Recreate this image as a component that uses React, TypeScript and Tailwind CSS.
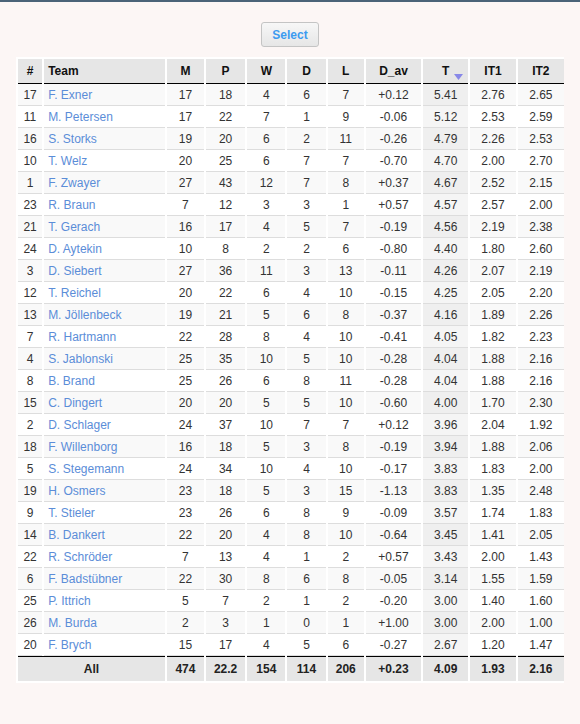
import React from "react";

type Row = [number, string, number, number, number, number, number, string, string, string, string];

const rows: Row[] = [
  [17, "F. Exner", 17, 18, 4, 6, 7, "+0.12", "5.41", "2.76", "2.65"],
  [11, "M. Petersen", 17, 22, 7, 1, 9, "-0.06", "5.12", "2.53", "2.59"],
  [16, "S. Storks", 19, 20, 6, 2, 11, "-0.26", "4.79", "2.26", "2.53"],
  [10, "T. Welz", 20, 25, 6, 7, 7, "-0.70", "4.70", "2.00", "2.70"],
  [1, "F. Zwayer", 27, 43, 12, 7, 8, "+0.37", "4.67", "2.52", "2.15"],
  [23, "R. Braun", 7, 12, 3, 3, 1, "+0.57", "4.57", "2.57", "2.00"],
  [21, "T. Gerach", 16, 17, 4, 5, 7, "-0.19", "4.56", "2.19", "2.38"],
  [24, "D. Aytekin", 10, 8, 2, 2, 6, "-0.80", "4.40", "1.80", "2.60"],
  [3, "D. Siebert", 27, 36, 11, 3, 13, "-0.11", "4.26", "2.07", "2.19"],
  [12, "T. Reichel", 20, 22, 6, 4, 10, "-0.15", "4.25", "2.05", "2.20"],
  [13, "M. Jöllenbeck", 19, 21, 5, 6, 8, "-0.37", "4.16", "1.89", "2.26"],
  [7, "R. Hartmann", 22, 28, 8, 4, 10, "-0.41", "4.05", "1.82", "2.23"],
  [4, "S. Jablonski", 25, 35, 10, 5, 10, "-0.28", "4.04", "1.88", "2.16"],
  [8, "B. Brand", 25, 26, 6, 8, 11, "-0.28", "4.04", "1.88", "2.16"],
  [15, "C. Dingert", 20, 20, 5, 5, 10, "-0.60", "4.00", "1.70", "2.30"],
  [2, "D. Schlager", 24, 37, 10, 7, 7, "+0.12", "3.96", "2.04", "1.92"],
  [18, "F. Willenborg", 16, 18, 5, 3, 8, "-0.19", "3.94", "1.88", "2.06"],
  [5, "S. Stegemann", 24, 34, 10, 4, 10, "-0.17", "3.83", "1.83", "2.00"],
  [19, "H. Osmers", 23, 18, 5, 3, 15, "-1.13", "3.83", "1.35", "2.48"],
  [9, "T. Stieler", 23, 26, 6, 8, 9, "-0.09", "3.57", "1.74", "1.83"],
  [14, "B. Dankert", 22, 20, 4, 8, 10, "-0.64", "3.45", "1.41", "2.05"],
  [22, "R. Schröder", 7, 13, 4, 1, 2, "+0.57", "3.43", "2.00", "1.43"],
  [6, "F. Badstübner", 22, 30, 8, 6, 8, "-0.05", "3.14", "1.55", "1.59"],
  [25, "P. Ittrich", 5, 7, 2, 1, 2, "-0.20", "3.00", "1.40", "1.60"],
  [26, "M. Burda", 2, 3, 1, 0, 1, "+1.00", "3.00", "2.00", "1.00"],
  [20, "F. Brych", 15, 17, 4, 5, 6, "-0.27", "2.67", "1.20", "1.47"],
];

const totals = ["474", "22.2", "154", "114", "206", "+0.23", "4.09", "1.93", "2.16"];

const th = "h-[25px] bg-[#e6e6e6] border-b border-black font-bold text-[#111] text-center p-0";
const td = "h-[22px] border-b border-[#dddddd] text-center p-0";
const tf = "h-[25px] bg-[#e6e6e6] border-t border-black text-center font-bold text-[#222] p-0";

const App = () => {
  return (
    <div
      className="min-h-[724px] bg-[#fcf6f5] text-[12px] text-[#333]"
      style={{ fontFamily: '"Liberation Sans", Arial, sans-serif' }}
    >
      <div className="h-[2px] bg-[#4b6378]" />

      <div className="flex justify-center pt-5">
        <button className="h-[25px] w-[58px] rounded-[3px] border border-[#c4c4c4] bg-gradient-to-b from-[#f7f7f7] to-[#e6e6e6] text-[12px] font-bold text-[#3d9bf0]">
          Select
        </button>
      </div>

      <div className="mx-4 mt-[10px] bg-white py-[2px]">
        <table className="w-[550px] table-fixed border-separate border-spacing-x-[2px] border-spacing-y-0">
          <colgroup>
            <col className="w-[24px]" />
            <col className="w-[120px]" />
            <col className="w-[37px]" />
            <col className="w-[39px]" />
            <col className="w-[38px]" />
            <col className="w-[38px]" />
            <col className="w-[36px]" />
            <col className="w-[55px]" />
            <col className="w-[45px]" />
            <col className="w-[45px]" />
            <col className="w-[46px]" />
          </colgroup>
          <thead>
            <tr>
              <th className={th}>#</th>
              <th className={`${th} !text-left pl-1`}>Team</th>
              <th className={th}>M</th>
              <th className={th}>P</th>
              <th className={th}>W</th>
              <th className={th}>D</th>
              <th className={th}>L</th>
              <th className={th}>D_av</th>
              <th className={`${th} relative`}>
                T
                <svg
                  className="absolute right-[5px] top-[15px]"
                  width="9"
                  height="6"
                  viewBox="0 0 9 6"
                >
                  <polygon points="0,0 9,0 4.5,6" fill="#8888e8" />
                </svg>
              </th>
              <th className={th}>IT1</th>
              <th className={th}>IT2</th>
            </tr>
          </thead>
          <tbody>
            {rows.map((r, i) => {
              const bg = i % 2 === 0 ? "bg-[#f9f9f9]" : "bg-white";
              const sortBg = i % 2 === 0 ? "bg-[#efefef]" : "bg-[#f5f5f5]";
              return (
                <tr key={r[0]}>
                  <td className={`${td} ${bg}`}>{r[0]}</td>
                  <td className={`${td} ${bg} !text-left pl-1 text-[#5b8dd8]`}>{r[1]}</td>
                  <td className={`${td} ${bg}`}>{r[2]}</td>
                  <td className={`${td} ${bg}`}>{r[3]}</td>
                  <td className={`${td} ${bg}`}>{r[4]}</td>
                  <td className={`${td} ${bg}`}>{r[5]}</td>
                  <td className={`${td} ${bg}`}>{r[6]}</td>
                  <td className={`${td} ${bg}`}>{r[7]}</td>
                  <td className={`${td} ${sortBg}`}>{r[8]}</td>
                  <td className={`${td} ${bg}`}>{r[9]}</td>
                  <td className={`${td} ${bg}`}>{r[10]}</td>
                </tr>
              );
            })}
          </tbody>
          <tfoot>
            <tr>
              <td colSpan={2} className={tf}>
                All
              </td>
              {totals.map((t, i) => (
                <td key={i} className={tf}>
                  {t}
                </td>
              ))}
            </tr>
          </tfoot>
        </table>
      </div>
    </div>
  );
};

export default App;
